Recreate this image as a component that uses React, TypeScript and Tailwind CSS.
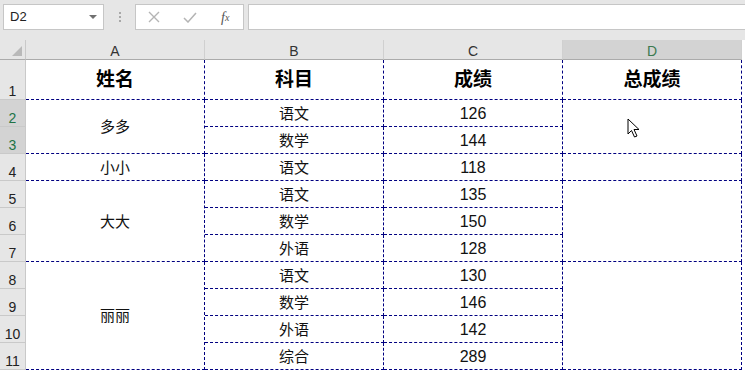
const font = "font-['Liberation_Sans','Noto_Sans_CJK_SC',sans-serif]"

type Row = { a?: [string, number]; b: string; c: string; d?: number }

const rows: Row[] = [
  { a: ['多多', 2], b: '语文', c: '126', d: 2 },
  { b: '数学', c: '144' },
  { a: ['小小', 1], b: '语文', c: '118', d: 1 },
  { a: ['大大', 3], b: '语文', c: '135', d: 3 },
  { b: '数学', c: '150' },
  { b: '外语', c: '128' },
  { a: ['丽丽', 4], b: '语文', c: '130', d: 4 },
  { b: '数学', c: '146' },
  { b: '外语', c: '142' },
  { b: '综合', c: '289' },
]

const span: Record<number, string> = {
  1: 'row-span-1',
  2: 'row-span-2',
  3: 'row-span-3',
  4: 'row-span-4',
}

const cell =
  'flex items-center justify-center border-r border-b border-dashed border-[#000080] pt-[2px] text-[15px] text-[#111]'

function RowHead({ n, active }: { n: number; active?: boolean }) {
  return (
    <div
      className={`flex items-end justify-center border-r border-b border-[#c9c9c9] text-[14px] leading-[16px] ${
        active ? 'bg-[#d3d3d3] text-[#217346]' : 'bg-[#e6e6e6] text-[#222]'
      }`}
    >
      {n}
    </div>
  )
}

function ColHead({ label, active }: { label: string; active?: boolean }) {
  return (
    <div
      className={`flex items-end justify-center border-r border-b border-r-[#d0d0d0] border-b-[#ababab] text-[14px] leading-[16px] ${
        active ? 'bg-[#d3d3d3] text-[#3b7a50]' : 'bg-[#e6e6e6] text-[#333]'
      }`}
    >
      {label}
    </div>
  )
}

export default function App() {
  return (
    <div className={`relative h-[371px] w-[745px] overflow-hidden bg-white ${font}`}>
      {/* formula bar */}
      <div className="flex h-[40px] items-start bg-[#e6e6e6] pt-[4px]">
        <div className="ml-[3px] flex h-[26px] w-[101px] items-center justify-between border border-[#c6c6c6] bg-white pl-[6px] pr-[6px] text-[13px] text-[#222]">
          <span>D2</span>
          <svg width="8" height="5" viewBox="0 0 8 5">
            <path d="M0 0 L8 0 L4 4 Z" fill="#707070" />
          </svg>
        </div>
        <div className="flex h-[26px] w-[31px] flex-col items-center justify-center gap-[2px]">
          <span className="h-[2px] w-[2px] bg-[#a8a8a8]" />
          <span className="h-[2px] w-[2px] bg-[#a8a8a8]" />
          <span className="h-[2px] w-[2px] bg-[#a8a8a8]" />
        </div>
        <div className="flex h-[26px] w-[109px] items-center border border-[#c6c6c6] bg-white">
          <div className="flex w-[36px] justify-center">
            <svg width="12" height="12" viewBox="0 0 12 12">
              <path d="M1 1 L11 11 M11 1 L1 11" stroke="#b4b4b4" strokeWidth="1.4" />
            </svg>
          </div>
          <div className="flex w-[36px] justify-center">
            <svg width="14" height="11" viewBox="0 0 14 11">
              <path d="M1 6 L5 10 L13 1" stroke="#b4b4b4" strokeWidth="1.5" fill="none" />
            </svg>
          </div>
          <div className="flex w-[36px] justify-center font-['Liberation_Serif',serif] text-[14px] italic text-[#555]">
            f<span className="mt-[3px] text-[10px]">x</span>
          </div>
        </div>
        <div className="ml-[4px] h-[26px] flex-1 border border-r-0 border-[#c6c6c6] bg-white" />
      </div>

      {/* sheet */}
      <div className="grid grid-cols-[26px_179px_179px_179px_179px] grid-rows-[20px_40px_repeat(10,27px)]">
        <div className="relative border-r border-b border-r-[#c9c9c9] border-b-[#ababab] bg-[#e6e6e6]">
          <svg className="absolute bottom-[3px] right-[3px]" width="10" height="10" viewBox="0 0 10 10">
            <path d="M10 0 L10 10 L0 10 Z" fill="#b9b9b9" />
          </svg>
        </div>
        <ColHead label="A" />
        <ColHead label="B" />
        <ColHead label="C" />
        <ColHead label="D" active />

        <RowHead n={1} />
        {['姓名', '科目', '成绩', '总成绩'].map((t) => (
          <div key={t} className={`${cell} text-[19px] font-bold text-black`}>
            {t}
          </div>
        ))}

        {rows.map((r, i) => [
          <RowHead key={`h${i}`} n={i + 2} active={i < 2} />,
          r.a ? (
            <div key={`a${i}`} className={`${cell} ${span[r.a[1]]}`}>
              {r.a[0]}
            </div>
          ) : null,
          <div key={`b${i}`} className={cell}>
            {r.b}
          </div>,
          <div key={`c${i}`} className={`${cell} text-[16px]`}>
            {r.c}
          </div>,
          r.d ? <div key={`d${i}`} className={`${cell} ${span[r.d]}`} /> : null,
        ])}
      </div>

      {/* mouse pointer */}
      <svg className="absolute left-[627px] top-[118px]" width="14" height="21" viewBox="0 0 14 21">
        <path
          d="M1 1 L1 16 L4.5 12.5 L7.5 19 L10 18 L7 11.5 L12 11.5 Z"
          fill="white"
          stroke="black"
          strokeWidth="1"
          strokeLinejoin="round"
        />
      </svg>
    </div>
  )
}
